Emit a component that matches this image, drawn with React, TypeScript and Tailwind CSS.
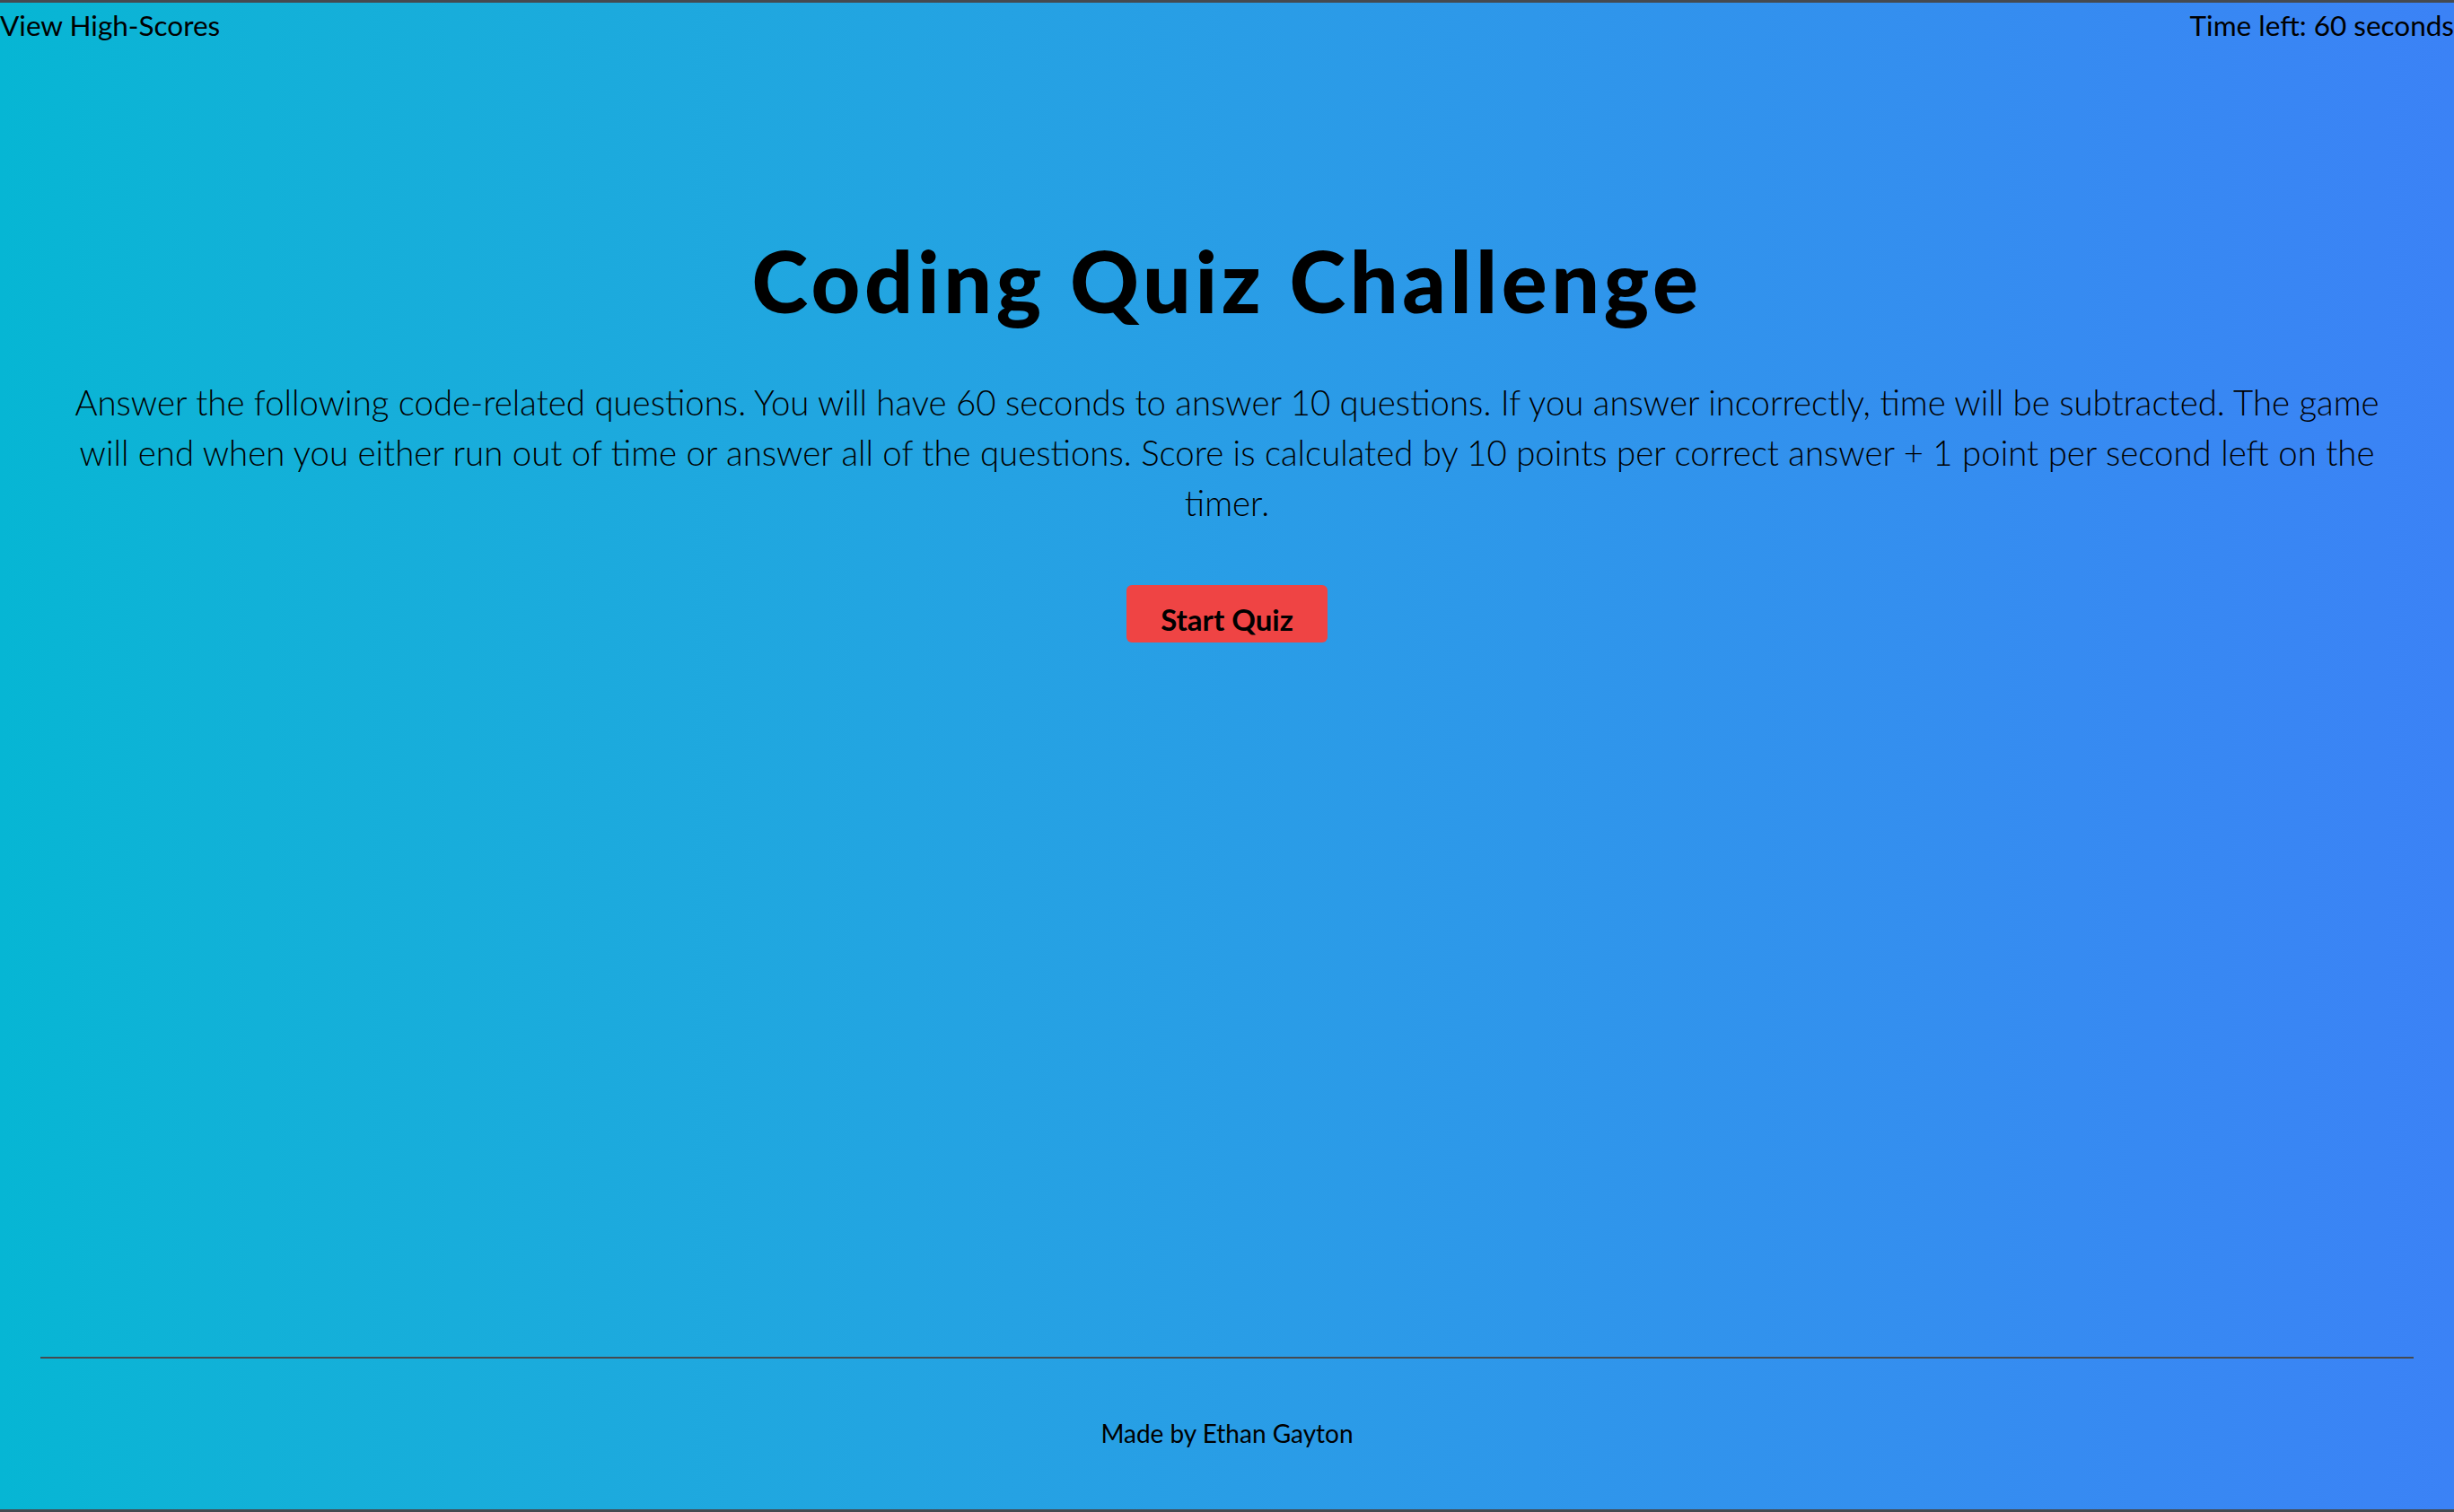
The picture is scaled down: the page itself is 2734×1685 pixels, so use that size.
import React from 'react';

const App: React.FC = () => {
  return (
    <div className="h-screen w-full flex flex-col bg-gradient-to-r from-[#06b6d4] to-[#3b82f6] border-t-[3px] border-b-[3px] border-[#454a50] text-black font-['Lato','Open_Sans',sans-serif] overflow-hidden">
      {/* Header */}
      <header className="flex items-start justify-between text-[31.5px] leading-[50px]">
        <a className="cursor-pointer">View High-Scores</a>
        <span>Time left: 60 seconds</span>
      </header>

      {/* Intro */}
      <main className="flex-1 flex flex-col items-center px-[72px]">
        <h1 className="mt-[212px] text-[95px] leading-none font-black tracking-[4.6px]">Coding Quiz Challenge</h1>
        <p className="mt-[60px] text-center text-[38.4px] leading-[56px] font-light">
          Answer the following code-related questions. You will have 60 seconds to answer 10 questions. If you answer incorrectly, time will be subtracted. The game will end when you either run out of time or answer all of the questions. Score is calculated by 10 points per correct answer + 1 point per second left on the timer.
        </p>
        <button className="mt-[64px] w-[224px] h-[64px] pt-[14px] bg-[#ef4444] rounded-[6px] text-[33px] font-bold">
          Start Quiz
        </button>
      </main>

      {/* Footer */}
      <footer className="h-[170px] px-[45px]">
        <hr className="border-t-2 border-[#454a50]" />
        <p className="mt-[62px] text-center text-[28px]">Made by Ethan Gayton</p>
      </footer>
    </div>
  );
};

export default App;
